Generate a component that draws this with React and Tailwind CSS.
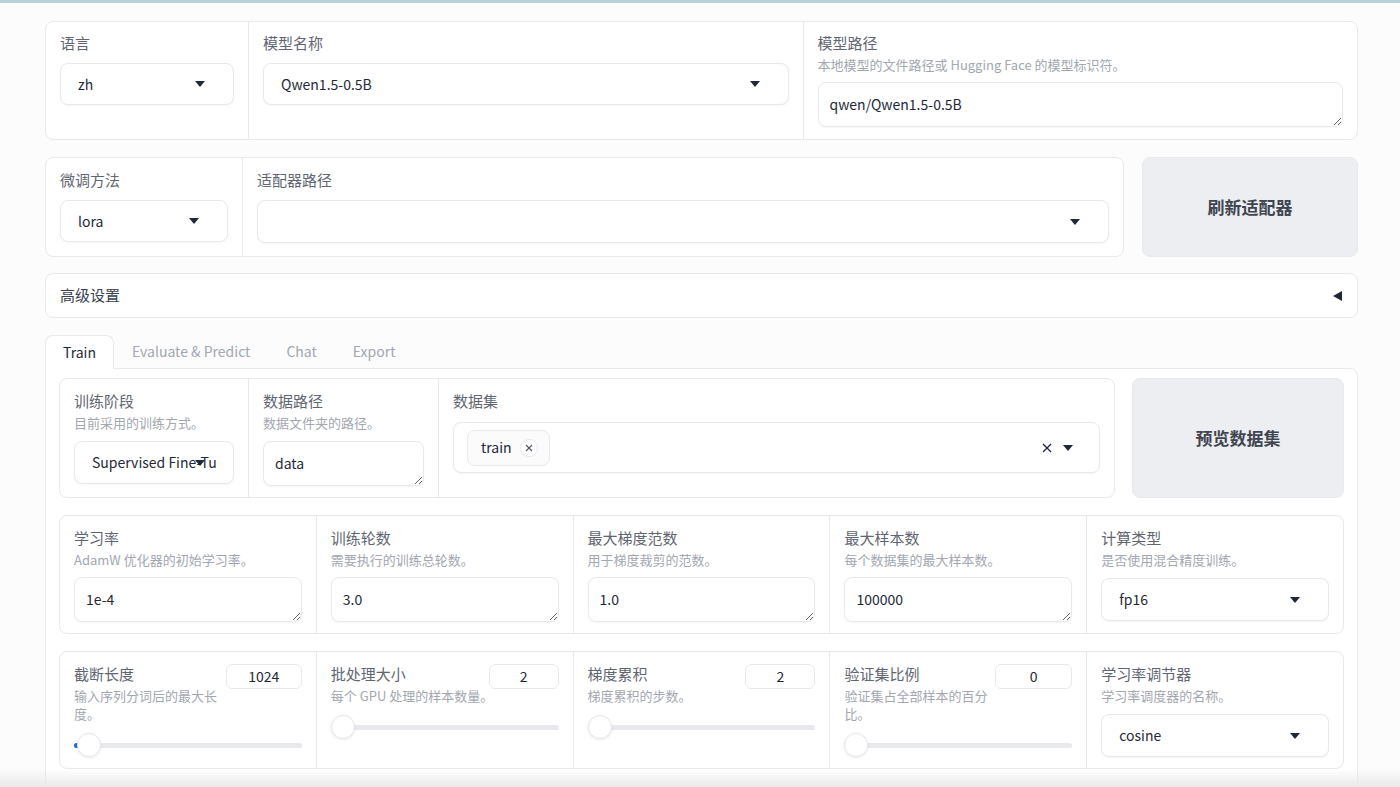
import { useState } from "react";

function Caret() {
  return (
    <svg width="10" height="6" viewBox="0 0 10 6">
      <path d="M0 0h10L5 6z" fill="#1f2937" />
    </svg>
  );
}

function Label({ children }) {
  return <div className="text-[15px] leading-[20px] text-[#5f6672]">{children}</div>;
}

function Info({ children, nowrap }) {
  return (
    <div className={`mt-[3px] text-[13px] leading-[18px] text-[#a2a7b0] ${nowrap ? "whitespace-nowrap" : ""}`}>
      {children}
    </div>
  );
}

function Select({ value, h = "h-[42px]" }) {
  return (
    <div className={`relative flex ${h} items-center rounded-lg border border-[#e8e9ec] bg-white shadow-[0_1px_2px_rgba(0,0,0,0.04)]`}>
      <div className="ml-[17px] mr-[16px] min-w-0 overflow-hidden whitespace-nowrap text-[14px] text-[#1f2937]">{value}</div>
      <div className="absolute right-[28px] top-1/2 -translate-y-1/2">
        <Caret />
      </div>
    </div>
  );
}

function TextBox({ value }) {
  return (
    <textarea
      readOnly
      rows={1}
      defaultValue={value}
      className="block h-[45px] w-full rounded-lg border border-[#e8e9ec] bg-white px-[11px] py-[11px] text-[14px] leading-[21px] text-[#1f2937] shadow-[0_1px_2px_rgba(0,0,0,0.04)] outline-none"
    />
  );
}

function Slider({ thumb = 0, fill = false }) {
  return (
    <div className="relative flex h-6 items-center">
      <div className="h-[5px] w-full rounded-full bg-[#e8e9ec]" />
      {fill ? <div className="absolute left-0 h-[5px] w-[8px] rounded-full bg-[#2563eb]" /> : null}
      <div
        className="absolute top-0 h-6 w-6 rounded-full border border-[#e5e7eb] bg-white shadow-[0_1px_3px_rgba(0,0,0,0.08)]"
        style={{ left: thumb }}
      />
    </div>
  );
}

function NumBox({ value, w }) {
  return (
    <div className={`flex h-[25px] ${w} shrink-0 items-center justify-center rounded-md border border-[#e8e9ec] bg-white text-[14px] text-[#1f2937]`}>
      {value}
    </div>
  );
}

function SliderField({ label, info, value, w, thumb, fill, nowrap }) {
  return (
    <div className="min-w-0 flex-1 px-[14px] pt-[12px] pb-[11px]">
      <div className="flex items-start gap-[3px]">
        <div className="min-w-0 flex-1">
          <Label>{label}</Label>
          <Info nowrap={nowrap}>{info}</Info>
        </div>
        <NumBox value={value} w={w} />
      </div>
      <div className="mt-[10px]">
        <Slider thumb={thumb} fill={fill} />
      </div>
    </div>
  );
}

function InputField({ label, info, value }) {
  return (
    <div className="min-w-0 flex-1 px-[14px] pt-[12px] pb-[11px]">
      <Label>{label}</Label>
      <Info>{info}</Info>
      <div className="mt-[8px]">
        <TextBox value={value} />
      </div>
    </div>
  );
}

const tabs = ["Train", "Evaluate & Predict", "Chat", "Export"];

export default function App() {
  const [tab, setTab] = useState("Train");

  return (
    <div className="relative h-[787px] overflow-hidden bg-[#fcfcfc] font-['Noto_Sans_CJK_SC','Noto_Sans',sans-serif]">
      <div className="h-[3px] bg-[#b6d3dc]" />
      <div className="pl-[45px] pr-[42px] pt-[18px]">
        {/* model row */}
        <div className="flex divide-x divide-[#e8e9ec] rounded-lg border border-[#e8e9ec] bg-white">
          <div className="w-[203px] px-[14px] pt-[11px]">
            <Label>语言</Label>
            <div className="mt-[10px]">
              <Select value="zh" />
            </div>
          </div>
          <div className="flex-1 px-[14px] pt-[11px]">
            <Label>模型名称</Label>
            <div className="mt-[10px]">
              <Select value="Qwen1.5-0.5B" />
            </div>
          </div>
          <div className="flex-1 px-[14px] pt-[11px] pb-[12px]">
            <Label>模型路径</Label>
            <Info>本地模型的文件路径或 Hugging Face 的模型标识符。</Info>
            <div className="mt-[8px]">
              <TextBox value="qwen/Qwen1.5-0.5B" />
            </div>
          </div>
        </div>

        {/* adapter row */}
        <div className="mt-[17px] flex gap-[18px]">
          <div className="flex flex-1 divide-x divide-[#e8e9ec] rounded-lg border border-[#e8e9ec] bg-white">
            <div className="w-[197px] px-[14px] pt-[12px] pb-[13px]">
              <Label>微调方法</Label>
              <div className="mt-[10px]">
                <Select value="lora" />
              </div>
            </div>
            <div className="flex-1 px-[14px] pt-[12px] pb-[13px]">
              <Label>适配器路径</Label>
              <div className="mt-[10px]">
                <Select value="" h="h-[43px]" />
              </div>
            </div>
          </div>
          <button className="w-[216px] rounded-lg border border-[#e8e9ec] bg-[#eceef1] text-[17px] font-bold text-[#3f4550]">
            刷新适配器
          </button>
        </div>

        {/* accordion */}
        <div className="mt-[16px] flex h-[45px] items-center justify-between rounded-lg border border-[#e8e9ec] bg-white pl-[14px] pr-[15px]">
          <span className="text-[15px] text-[#374151]">高级设置</span>
          <svg width="9" height="10" viewBox="0 0 9 10">
            <path d="M9 0v10L0 5z" fill="#1f2937" />
          </svg>
        </div>

        {/* tabs */}
        <div className="mt-[17px] flex h-[33px] items-end">
          {tabs.map((t) => (
            <button
              key={t}
              onClick={() => setTab(t)}
              className={
                t === tab
                  ? "relative z-10 -mb-px flex h-[34px] items-center rounded-t-lg border border-b-0 border-[#e8e9ec] bg-white px-[17px] text-[14px] text-[#1f2937]"
                  : "flex h-[33px] items-center px-[18px] text-[14px] text-[#a2a7b0]"
              }
            >
              {t}
            </button>
          ))}
        </div>
        <div className="rounded-b-lg rounded-tr-lg border border-[#e8e9ec] bg-white px-[13px] pt-[9px] pb-[20px]">
          {/* data row */}
          <div className="flex gap-[17px]">
            <div className="flex flex-1 divide-x divide-[#e8e9ec] rounded-lg border border-[#e8e9ec] bg-white">
              <div className="w-[189px] px-[14px] pt-[12px] pb-[11px]">
                <Label>训练阶段</Label>
                <Info>目前采用的训练方式。</Info>
                <div className="mt-[9px]">
                  <Select value="Supervised Fine-Tuning" h="h-[43px]" />
                </div>
              </div>
              <div className="w-[190px] px-[14px] pt-[12px] pb-[11px]">
                <Label>数据路径</Label>
                <Info>数据文件夹的路径。</Info>
                <div className="mt-[9px]">
                  <TextBox value="data" />
                </div>
              </div>
              <div className="flex-1 px-[14px] pt-[12px]">
                <Label>数据集</Label>
                <div className="relative mt-[11px] flex h-[51px] items-center rounded-lg border border-[#e8e9ec] bg-white pl-[13px] shadow-[0_1px_2px_rgba(0,0,0,0.04)]">
                  <div className="flex h-[36px] items-center gap-[8px] rounded-lg border border-[#e8e9ec] bg-[#fbfbfc] pl-[13px] pr-[11px] text-[14px] text-[#1f2937]">
                    train
                    <span className="flex h-[18px] w-[18px] items-center justify-center rounded-full border border-[#e8e9ec] bg-white">
                      <svg width="8" height="8" viewBox="0 0 8 8">
                        <path d="M1 1l6 6M7 1l-6 6" stroke="#4b5563" strokeWidth="1.1" />
                      </svg>
                    </span>
                  </div>
                  <div className="absolute right-[26px] top-1/2 flex -translate-y-1/2 items-center gap-[11px]">
                    <svg width="10" height="10" viewBox="0 0 10 10">
                      <path d="M1 1l8 8M9 1l-8 8" stroke="#1f2937" strokeWidth="1.3" />
                    </svg>
                    <Caret />
                  </div>
                </div>
              </div>
            </div>
            <button className="w-[212px] rounded-lg border border-[#e8e9ec] bg-[#eceef1] text-[17px] font-bold text-[#3f4550]">
              预览数据集
            </button>
          </div>

          {/* hyper params row */}
          <div className="mt-[17px] flex divide-x divide-[#e8e9ec] rounded-lg border border-[#e8e9ec] bg-white">
            <InputField label="学习率" info="AdamW 优化器的初始学习率。" value="1e-4" />
            <InputField label="训练轮数" info="需要执行的训练总轮数。" value="3.0" />
            <InputField label="最大梯度范数" info="用于梯度裁剪的范数。" value="1.0" />
            <InputField label="最大样本数" info="每个数据集的最大样本数。" value="100000" />
            <div className="min-w-0 flex-1 px-[14px] pt-[12px] pb-[11px]">
              <Label>计算类型</Label>
              <Info>是否使用混合精度训练。</Info>
              <div className="mt-[9px]">
                <Select value="fp16" h="h-[43px]" />
              </div>
            </div>
          </div>

          {/* slider row */}
          <div className="mt-[17px] flex divide-x divide-[#e8e9ec] rounded-lg border border-[#e8e9ec] bg-white">
            <SliderField label="截断长度" info="输入序列分词后的最大长度。" value="1024" w="w-[76px]" thumb={3} fill />
            <SliderField label="批处理大小" info="每个 GPU 处理的样本数量。" value="2" w="w-[70px]" thumb={0} nowrap />
            <SliderField label="梯度累积" info="梯度累积的步数。" value="2" w="w-[70px]" thumb={0} />
            <SliderField label="验证集比例" info="验证集占全部样本的百分比。" value="0" w="w-[77px]" thumb={0} />
            <div className="min-w-0 flex-1 px-[14px] pt-[12px] pb-[11px]">
              <Label>学习率调节器</Label>
              <Info>学习率调度器的名称。</Info>
              <div className="mt-[9px]">
                <Select value="cosine" h="h-[43px]" />
              </div>
            </div>
          </div>

          <div className="mt-[18px] h-[60px] rounded-lg border border-[#e8e9ec] bg-white" />
        </div>
      </div>
      <div className="pointer-events-none absolute bottom-0 left-0 right-0 h-[18px] bg-gradient-to-b from-transparent to-[#e9e9e9]" />
    </div>
  );
}
